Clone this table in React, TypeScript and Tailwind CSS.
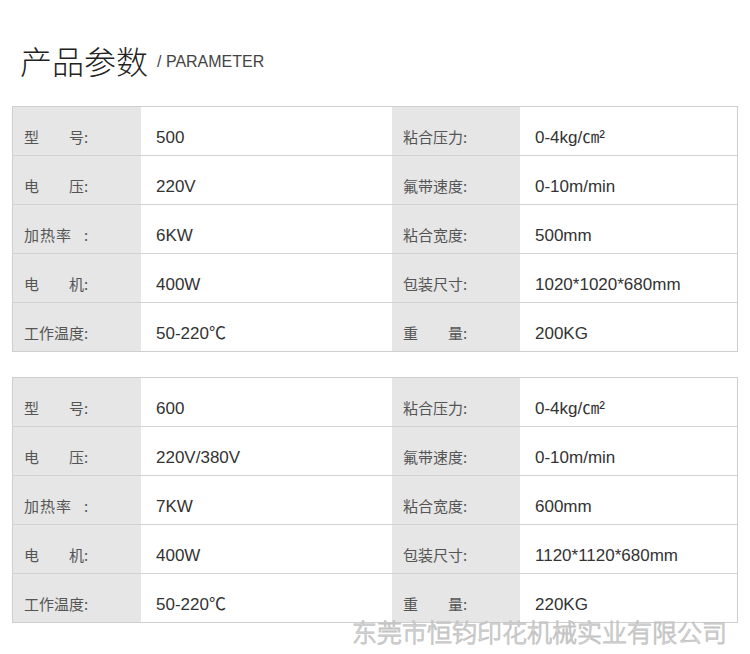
const tables = [
  [
    ["型　　号:", "500", "粘合压力:", "0-4kg/㎝²"],
    ["电　　压:", "220V", "氟带速度:", "0-10m/min"],
    ["加热率", "6KW", "粘合宽度:", "500mm"],
    ["电　　机:", "400W", "包装尺寸:", "1020*1020*680mm"],
    ["工作温度:", "50-220℃", "重　　量:", "200KG"],
  ],
  [
    ["型　　号:", "600", "粘合压力:", "0-4kg/㎝²"],
    ["电　　压:", "220V/380V", "氟带速度:", "0-10m/min"],
    ["加热率", "7KW", "粘合宽度:", "600mm"],
    ["电　　机:", "400W", "包装尺寸:", "1120*1120*680mm"],
    ["工作温度:", "50-220℃", "重　　量:", "220KG"],
  ],
];

function Label({ text }: { text: string }) {
  return (
    <div className="flex h-[48px] items-center bg-[#e6e6e6] pt-[13px] pl-[11px] text-[15px] text-[#555] [font-family:'Noto_Sans_CJK_SC',sans-serif]">
      {text === "加热率" ? (
        <>
          <span className="tracking-[1px]">加热率</span>
          <span className="ml-[12px]">:</span>
        </>
      ) : (
        <span>{text}</span>
      )}
    </div>
  );
}

function Value({ text }: { text: string }) {
  return (
    <div className="flex h-[48px] items-center pt-[13px] pl-[15px] text-[17px] text-[#333] [font-family:'Liberation_Sans','Noto_Sans_CJK_SC',sans-serif]">
      {text}
    </div>
  );
}

function SpecTable({ rows }: { rows: string[][] }) {
  return (
    <div className="mx-[12px] w-[726px] border border-[#cfcfcf]">
      {rows.map((r, i) => (
        <div
          key={i}
          className={`grid grid-cols-[128px_251px_128px_1fr] ${i > 0 ? "border-t border-[#d2d2d2]" : ""}`}
        >
          <Label text={r[0]} />
          <Value text={r[1]} />
          <Label text={r[2]} />
          <Value text={r[3]} />
        </div>
      ))}
    </div>
  );
}

export default function App() {
  return (
    <div className="relative h-[654px] w-[750px] overflow-hidden bg-white">
      <div className="flex items-center px-[20px] pt-[38px] pb-[24px]">
        <span className="text-[32px] leading-[44px] font-light text-[#222] [font-family:'Noto_Sans_CJK_SC',sans-serif]">
          产品参数
        </span>
        <span className="ml-[9px] mt-[4px] text-[16px] text-[#444] [font-family:'Liberation_Sans',sans-serif]">
          / PARAMETER
        </span>
      </div>
      <SpecTable rows={tables[0]} />
      <div className="h-[25px]" />
      <SpecTable rows={tables[1]} />
      <div className="absolute left-[352px] top-[616px] text-[25px] leading-[30px] font-light text-transparent [-webkit-text-stroke:1px_#c4c4c4] [font-family:'Noto_Sans_CJK_SC',sans-serif]">
        东莞市恒钧印花机械实业有限公司
      </div>
    </div>
  );
}
